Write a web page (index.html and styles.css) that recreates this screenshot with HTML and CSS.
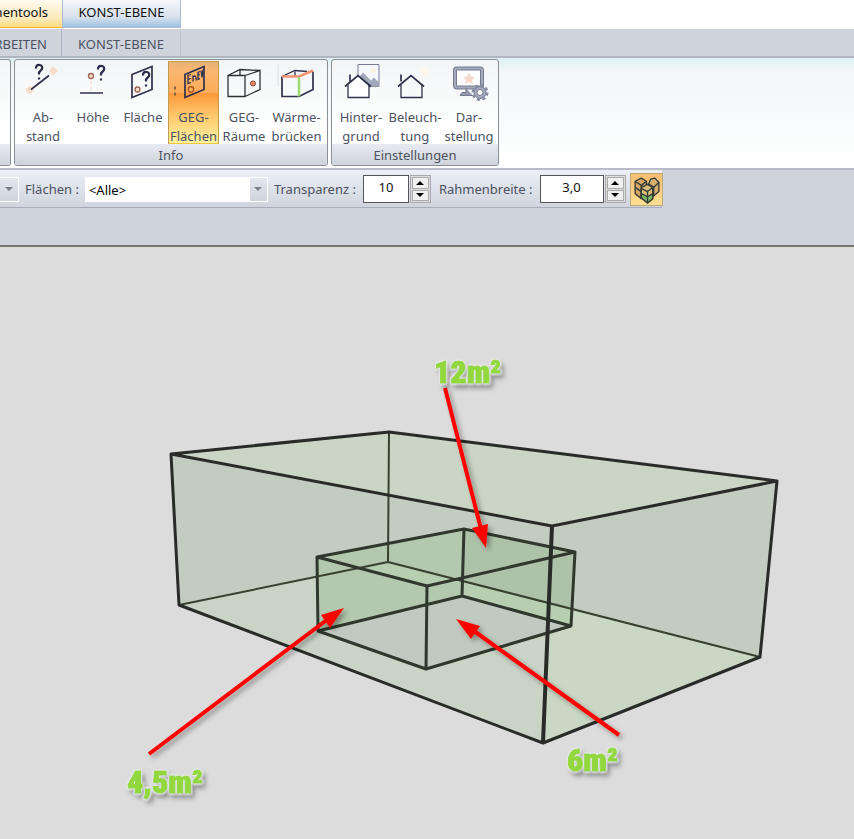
FILE: index.html
```html
<!DOCTYPE html>
<html lang="de">
<head>
<meta charset="utf-8">
<title>Konst-Ebene</title>
<link rel="stylesheet" href="styles.css">
</head>
<body>
<header>
  <nav class="contexts">
    <a class="context context-gold" href="#tools">nentools</a>
    <a class="context context-blue" href="#konst">KONST-EBENE</a>
  </nav>
  <nav class="tabs">
    <a class="tab tab-first" href="#bearbeiten">RBEITEN</a>
    <a class="tab" href="#ebene">KONST-EBENE</a>
  </nav>
</header>

<section class="ribbon">
  <div class="group group-cut"><div class="tools"></div><div class="caption"></div></div>
  <div class="group">
    <div class="tools">
      <button class="tool">
        <svg class="icon" viewBox="0 0 40 40"><g fill="#f8dccb"><path d="M2 28l5-4 4 5-5 4zM26 9l4-4 5 4-5 5z"/></g><path class="ink" d="M8 28L26 14"/><path class="mark" d="M13 7q0-4 3.500-3.500Q20 4 19 7.500L16 11v2M16 16v2"/></svg>
        <span>Ab-<br>stand</span>
      </button>
      <button class="tool">
        <svg class="icon" viewBox="0 0 40 40"><circle class="dot" cx="18" cy="14.500" r="2.500"/><path d="M18 19v12" stroke="#f8dccb" stroke-dasharray="4 2"/><path class="ink" d="M7 31.500h23"/><path class="mark" d="M25 8q0-4 3.500-3.500Q32 5 31 8.500L28 12v2M28 17v2"/></svg>
        <span>Höhe</span>
      </button>
      <button class="tool">
        <svg class="icon" viewBox="0 0 40 40"><path class="ink" d="M9 13L29 5v23L9 36z"/><circle class="dot" cx="14.500" cy="28" r="2.500"/><path class="mark" d="M20 14q0-4 3.500-3.500Q27 11 26 14.500L23 18v2M23 23v2"/></svg>
        <span>Fläche</span>
      </button>
      <button class="tool tool-active">
        <svg class="icon" viewBox="0 0 40 40"><path class="ink" d="M11 13L30 5v23L11 36z"/><path class="ink thin" d="M17 13l-3 1v8l3-1M14 18l3-1M19 20v-6M19 16q2-3 3 0v3M26 10l-2 1v7l2-1M24 14l2-1M27 9l1 7 1-8"/><circle cx="17" cy="28" r="2.700" fill="none" stroke="#b6581f" stroke-width="1.500"/><path d="M1 25v3M1 31v3" stroke="#68483b" stroke-width="1.500"/></svg>
        <span>GEG-<br>Flächen</span>
      </button>
      <button class="tool">
        <svg class="icon" viewBox="0 0 40 40"><path class="ink thin black" d="M4 14h17v21H4zM21 14l15-5v19l-15 7M4 14l12-6 20 1M16 8v6"/><circle cx="29" cy="22" r="2.500" fill="#ec8a61" stroke="#774536"/></svg>
        <span>GEG-<br>Räume</span>
      </button>
      <button class="tool tool-info">
        <svg class="icon" viewBox="0 0 40 40"><path d="M1 3v22" stroke="#dedede"/><path class="ink" d="M5 15v20h17M36 10v18l-14 7"/><path class="ink thin" d="M5 15l13-6 12 1M18 10v5"/><path d="M5 15h17l14-6" fill="none" stroke="#f19477" stroke-width="2.500"/><path d="M22 16v19" stroke="#99dc70" stroke-width="2.500"/></svg>
        <span>Wärme-<br>brücken</span>
      </button>
    </div>
    <div class="caption">Info</div>
  </div>
  <div class="group">
    <div class="tools tools-tight">
      <button class="tool tool-wide">
        <svg class="icon" viewBox="0 0 40 40"><path d="M17 3h21v22H17z" fill="#f5f7fc" stroke="#777c96"/><circle cx="32" cy="9" r="3" fill="#faf3e6"/><path d="M17 17l5-6 8 8 3-3 5 5v4H17z" fill="#a2a9bb"/><path d="M7 24L17 15l10 9v12H7z" fill="#fff"/><path class="ink" d="M4 25l13-11 13 11M9 20v-7"/><path class="ink thin" d="M7 23v13h21V23"/></svg>
        <span>Hinter-<br>grund</span>
      </button>
      <button class="tool tool-wide">
        <svg class="icon" viewBox="0 0 40 40"><circle cx="30" cy="10" r="5" fill="#fcf8ed"/><path class="ink" d="M3 25l13-11 13 11M6 20v-7"/><path class="ink thin" d="M6 23v13h21V23"/></svg>
        <span>Beleuch-<br>tung</span>
      </button>
      <button class="tool tool-wide">
        <svg class="icon" viewBox="0 0 40 40"><rect x="6" y="7" width="27" height="19" rx="2" fill="#fdfdff" stroke="#747b92" stroke-width="4"/><rect x="6" y="7" width="27" height="19" rx="2" fill="none" stroke="#a4aabc" stroke-width="2"/><path d="M20 11l2 4 4 .500-3 3 1 4-4-2-4 2 1-4-3-3 4-.500z" fill="#f7dacb"/><path d="M17 27v4h-4l-2 3h13" fill="#9198ac" stroke="#747b92"/><circle cx="31" cy="31" r="6" fill="#a4aabc" stroke="#747b92"/><circle cx="31" cy="31" r="7" fill="none" stroke="#858ca2" stroke-width="3" stroke-dasharray="3 2.500"/><circle cx="31" cy="31" r="3" fill="#fff" stroke="#747b92"/></svg>
        <span>Dar-<br>stellung</span>
      </button>
    </div>
    <div class="caption">Einstellungen</div>
  </div>
</section>

<section class="optionbar">
  <div class="options">
    <button class="drop drop-lone" aria-label="Auswahl"></button>
    <label for="areas">Flächen :</label>
    <div class="combo"><select id="areas"><option>&lt;Alle&gt;</option></select><span class="drop"></span></div>
    <label for="alpha">Transparenz :</label>
    <div class="spin"><input id="alpha" class="narrow" value="10"><div class="steps"><button class="up" aria-label="Mehr"></button><button class="down" aria-label="Weniger"></button></div></div>
    <label for="frame">Rahmenbreite :</label>
    <div class="spin"><input id="frame" value="3,0"><div class="steps"><button class="up" aria-label="Mehr"></button><button class="down" aria-label="Weniger"></button></div></div>
    <button class="cubes" aria-label="Räume">
      <svg viewBox="0 0 30 30"><g stroke="#343b35" stroke-width="1.300" stroke-linejoin="round"><path d="M4 7l6-3 5 3v4l-5 3v10l-6-5z" fill="#d5a764"/><path d="M4 7l6 4 5-4M10 11v12M4 13l6 4" fill="none"/><path d="M17 10l2-5 4-1 4 4v9l-6 5V12z" fill="#d8b070"/><path d="M17 10l5 3 5-5M22 13v8" fill="none"/><path d="M10 17v-4l6-3 5 3v11l-5 4-6-5z" fill="#d9bd79"/><path d="M10 19l6 3 5-3v5l-5 4-6-5z" fill="#79b964"/><path d="M10 14l6 3 5-4M16 17v11" fill="none"/></g></svg>
    </button>
  </div>
</section>

<main>
  <svg class="scene" viewBox="0 247 854 592">
    <defs><filter id="shade" x="-20%" y="-20%" width="150%" height="150%"><feDropShadow dx="3" dy="3" stdDeviation="2.500" flood-color="#000" flood-opacity=".35"/></filter>
    <filter id="halo" x="-20%" y="-20%" width="150%" height="160%"><feDropShadow dx="0" dy="0" stdDeviation="1" flood-color="#fff"/><feDropShadow dx="3" dy="4" stdDeviation="2.500" flood-color="#000" flood-opacity=".4"/></filter></defs>
    <path fill="#c3ccc1" d="M171 454L389 432 777 481 760 657 543 743 179 605z"/>
    <path fill="#c9d4c6" d="M179 605L388 562 760 657 543 743z"/>
    <path fill="#cbd7c5" d="M549 603L760 657 543 743z"/>
    <path fill="#cad5c5" d="M171 454L389 432 777 481 552 526z"/>
    <path fill="#c1cac0" d="M318 631L462 596 571 626 426 669z"/>
    <path fill="#b3c8ae" d="M317 557L464 529 462 596 318 631z"/>
    <path fill="#aec2aa" d="M464 529L575 552 571 626 462 596z"/>
    <path fill="#b7ceb1" d="M360 568L388 562 462 581 427 586zM462 581L573 609 571 626 462 596z"/>
    <g class="edges far"><path d="M389 432L388 562M179 605L388 562 760 657"/></g>
    <g class="edges inner"><path d="M317 557L464 529 575 552 427 586zM317 557L318 631 426 669 571 626 575 552M427 586L426 669M464 529L462 596M318 631L462 596 571 626"/></g>
    <g class="edges"><path d="M171 454L389 432 777 481 552 526zM171 454L179 605 543 743 760 657 777 481"/><path class="front" d="M552 526L543 743"/></g>
    <g filter="url(#shade)" fill="red" stroke="red">
      <path class="arrow" d="M445 388L481 529M149 754L328 619M619 735L474 631"/>
      <path stroke="none" d="M486 548L472 528 488 524zM344 608L330 628 321 615zM456 619L480 626 471 639z"/>
    </g>
    <g class="measure" filter="url(#halo)"><text x="434" y="383">12m²</text><text x="127" y="793">4,5m²</text><text x="567" y="771">6m²</text></g>
  </svg>
</main>
</body>
</html>
```
FILE: styles.css
```css
* { box-sizing: border-box; }
body {
  margin: 0;
  min-height: 100vh;
  display: flex;
  flex-direction: column;
  background: #dcdcdc;
  font: 13px/19px "Segoe UI", "Noto Sans", sans-serif;
  color: #4c5261;
  overflow-x: hidden;
}
a { color: inherit; text-decoration: none; }
button { font: inherit; color: inherit; border: 0; padding: 0; background: none; }

.contexts { display: flex; height: 29px; background: #fff; }
.context { height: 28px; padding-top: 3px; text-align: center; color: #111; }
.context-blue { width: 119px; background: linear-gradient(#f5f7fa, #d6e0ec 65%, #9ec3e3); border: solid #a9bbd2; border-width: 0 1px 1px; }
.tabs { display: flex; height: 29px; background: #cfd3dc; border-bottom: 2px solid #b1b5bd; }
.tab { width: 119px; padding-top: 6px; text-align: center; border-right: 1px solid #bcc5d3; }
.context-gold, .tab-first { width: 62px; display: flex; justify-content: flex-end; padding-right: 14px; white-space: nowrap; overflow: hidden; }
.context-gold { background: linear-gradient(#fffaf0, #fbe9b8 70%, #fbdc80); border-bottom: 1px solid #f3ba31; }
.tab-first { border-right-color: #a9b4c6; }

.ribbon {
  display: flex;
  gap: 3px;
  height: 110px;
  padding-top: 1px;
  background: linear-gradient(#dff0f4, #f2f6f8 12px, #fff);
  border-bottom: 1px solid #fff;
}
.group { display: flex; flex-direction: column; height: 107px; border: 1px solid #8b8e95; border-radius: 3px; overflow: hidden; background: linear-gradient(#f2f5f6, #fff 70px); }
.group-cut { width: 11px; border-left: 0; border-radius: 0 3px 3px 0; }
.tools { display: flex; height: 84px; padding: 1px 3px 0; }
.tools-tight { padding: 1px 2px 0; }
.tool { display: flex; flex-direction: column; align-items: center; width: 50px; height: 83px; overflow: hidden; white-space: nowrap; }
.tool span { padding-top: 6px; }
.tool-wide { width: 54px; }
.tool-info { width: 55px; }
.tool-active { width: 51px; border: 1px solid #c49a4b; border-bottom-color: #f4c63c; background: linear-gradient(#e5b277, #fbb671 10%, #fbad59 38%, #fb993a 39%, #fdc66a 65%, #fff2a0); }
.tool-active .icon { margin-top: -1px; }
.icon { flex: none; width: 40px; height: 41px; }
.ink { fill: none; stroke: #30314c; stroke-width: 1.700; }
.thin { stroke-width: 1.300; }
.black { stroke: #303033; }
.mark { fill: none; stroke: #292a49; stroke-width: 2.200; }
.dot { fill: #f8dccb; stroke: #9b6555; stroke-width: 1.300; }
.caption { flex: 1; text-align: center; background: linear-gradient(#e8eaf2, #cfd3dc); padding-top: 2px; }

.optionbar { height: 79px; background: #cfd3dc; border-bottom: 2px solid #74746f; border-top: 2px solid #b9bcc8; }
.options { display: flex; align-items: center; width: 662px; height: 38px; padding-top: 1px; background: linear-gradient(#ebeff8, #d0d4dd); border-bottom: 1px solid #a9acb8; }
.options label { white-space: nowrap; flex: none; }
.drop { flex: none; display: flex; width: 19px; height: 25px; align-items: center; justify-content: center; border: 1px solid #fff; background: linear-gradient(#e3e7ef, #cfd3dc); }
.drop::after { content: ""; border: solid transparent; border-width: 4px 4px 0; border-top-color: #7b7e86; }
.drop-lone { margin-right: 6px; border-left: 0; }
.combo { display: flex; flex: none; width: 183px; height: 25px; margin: 0 6px; background: #fff; }
.combo select { appearance: none; flex: 1; border: 0; padding: 2px 4px 0; background: #fff; font: inherit; color: #000; }
.spin { display: flex; flex: none; height: 28px; margin: 0 8px 0 7px; }
.spin input { width: 64px; height: 28px; border: 1px solid #555; padding: 0 0 4px; text-align: center; background: #fff; font: inherit; color: #111; }
.spin .narrow { width: 46px; }
.steps { display: grid; gap: 1px; width: 21px; margin-left: 1px; padding: 1px; border: 1px solid #aaa; background: #ddd; }
.steps button { display: grid; place-items: center; border: 1px solid #aaa; background: #f0f0f0; }
.up::after, .down::after { content: ""; border: 4px solid transparent; }
.up::after { border-top: 0; border-bottom-color: #000; }
.down::after { border-bottom: 0; border-top-color: #000; }
.cubes { flex: none; width: 33px; height: 33px; margin-left: auto; border: 1px solid #bba77c; background: linear-gradient(#f8bd72, #ffdf92); }
.spin:nth-last-child(2) { margin-right: 4px; }
.cubes svg { display: block; width: 31px; height: 31px; }

main { flex: 1; display: flex; }
.scene { width: 100%; height: auto; }
.edges { fill: none; stroke: #292b28; stroke-width: 3; stroke-linejoin: round; }
.far { stroke: #38402f; stroke-width: 2; }
.inner { stroke: #30382d; }
.front { stroke-width: 4; }
.arrow { stroke-width: 4; }
.measure { font: 900 32px "Impact", "Roboto Condensed", Roboto, sans-serif; fill: #92d83d; stroke: #92d83d; }
```
